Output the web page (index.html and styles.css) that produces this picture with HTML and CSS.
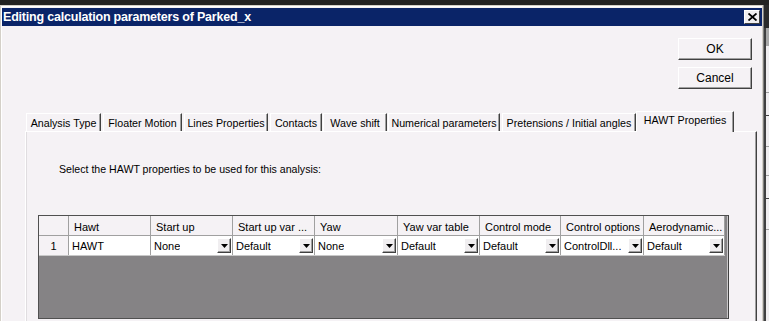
FILE: index.html
```html
<!DOCTYPE html>
<html>
<head>
<meta charset="utf-8">
<link rel="stylesheet" href="styles.css">
</head>
<body>
<div class="screen">
  <div class="topstrip"></div>
  <div class="main">
    <div class="window">
      <div class="titlebar">
        <span class="title">Editing calculation parameters of Parked_x</span>
        <div class="closebtn"><svg width="9" height="8" viewBox="0 0 9 8"><path d="M0.5 0.5 L8.5 7.5 M8.5 0.5 L0.5 7.5" stroke="#000" stroke-width="1.8"/></svg></div>
      </div>
      <div class="body">
        <div class="buttons">
          <div class="btn">OK</div>
          <div class="btn">Cancel</div>
        </div>
        <div class="tabs">
          <div class="tab w1">Analysis Type</div>
          <div class="tab w2">Floater Motion</div>
          <div class="tab w3">Lines Properties</div>
          <div class="tab w4">Contacts</div>
          <div class="tab w5">Wave shift</div>
          <div class="tab w6">Numerical parameters</div>
          <div class="tab w7">Pretensions / Initial angles</div>
          <div class="tab active w8">HAWT Properties</div>
        </div>
        <div class="panel">
          <div class="intro">Select the HAWT properties to be used for this analysis:</div>
          <div class="grid">
            <div class="row head">
              <div class="cell rh"></div>
              <div class="cell c1">Hawt</div>
              <div class="cell c2">Start up</div>
              <div class="cell c3">Start up var ...</div>
              <div class="cell c4">Yaw</div>
              <div class="cell c5">Yaw var table</div>
              <div class="cell c6">Control mode</div>
              <div class="cell c7">Control options</div>
              <div class="cell c8">Aerodynamic...</div>
            </div>
            <div class="row data">
              <div class="cell rh">1</div>
              <div class="cell c1">HAWT</div>
              <div class="cell c2 combo"><span>None</span><i class="dd"><svg width="7" height="4" viewBox="0 0 7 4"><path d="M0 0H7L3.5 4Z" fill="#000"/></svg></i></div>
              <div class="cell c3 combo"><span>Default</span><i class="dd"><svg width="7" height="4" viewBox="0 0 7 4"><path d="M0 0H7L3.5 4Z" fill="#000"/></svg></i></div>
              <div class="cell c4 combo"><span>None</span><i class="dd"><svg width="7" height="4" viewBox="0 0 7 4"><path d="M0 0H7L3.5 4Z" fill="#000"/></svg></i></div>
              <div class="cell c5 combo"><span>Default</span><i class="dd"><svg width="7" height="4" viewBox="0 0 7 4"><path d="M0 0H7L3.5 4Z" fill="#000"/></svg></i></div>
              <div class="cell c6 combo"><span>Default</span><i class="dd"><svg width="7" height="4" viewBox="0 0 7 4"><path d="M0 0H7L3.5 4Z" fill="#000"/></svg></i></div>
              <div class="cell c7 combo"><span>ControlDll...</span><i class="dd"><svg width="7" height="4" viewBox="0 0 7 4"><path d="M0 0H7L3.5 4Z" fill="#000"/></svg></i></div>
              <div class="cell c8 combo"><span>Default</span><i class="dd"><svg width="7" height="4" viewBox="0 0 7 4"><path d="M0 0H7L3.5 4Z" fill="#000"/></svg></i></div>
            </div>
          </div>
        </div>
      </div>
    </div>
    <div class="side">
      <div class="side-top"></div>
      <div class="side-mid"></div>
      <div class="side-list">
        <div class="sl a"></div>
        <div class="sl b"></div>
        <div class="sl c"></div>
        <div class="sl d"></div>
        <div class="sl e"></div>
        <div class="sl f"></div>
      </div>
    </div>
  </div>
</div>
</body>
</html>
```
FILE: styles.css
```css
html, body {
  margin: 0;
  padding: 0;
  background: #f5f2f5;
}
.screen {
  width: 769px;
  height: 321px;
  overflow: hidden;
  display: flex;
  flex-direction: column;
  font-family: "Liberation Sans", Arial, sans-serif;
  font-size: 11px;
  color: #000;
}
.topstrip {
  height: 5px;
  background: #222222;
  flex: none;
}
.main {
  flex: 1;
  display: flex;
  min-height: 0;
}
.window {
  width: 760px;
  flex: none;
  border-top: 1px solid #d4d0c8;
  border-left: 1px solid #d4d0c8;
  border-right: 1px solid #d4d0c8;
  padding: 2px 0 0 1px;
  box-shadow: inset 1px 1px 0 #ffffff;
  background: #f5f2f5;
  display: flex;
  flex-direction: column;
}
.titlebar {
  height: 18px;
  background: #0a2468;
  display: flex;
  align-items: center;
  justify-content: space-between;
  padding: 0 2px 0 1px;
  flex: none;
}
.title {
  color: #fff;
  font-family: "Liberation Sans", Arial, sans-serif;
  font-weight: bold;
  font-size: 12.5px;
  letter-spacing: -0.2px;
}
.closebtn {
  width: 14px;
  height: 12px;
  background: #f0eef0;
  border-top: 1px solid #fff;
  border-left: 1px solid #fff;
  border-right: 1px solid #404040;
  border-bottom: 1px solid #404040;
  display: flex;
  align-items: center;
  justify-content: center;
}
.body {
  flex: 1;
  display: flex;
  flex-direction: column;
  min-height: 0;
}
.buttons {
  display: flex;
  flex-direction: column;
  align-items: flex-end;
  gap: 7px;
  padding: 12px 10px 0 0;
}
.btn {
  width: 72px;
  height: 20px;
  border-top: 1px solid #fff;
  border-left: 1px solid #fff;
  border-right: 1px solid #404040;
  border-bottom: 1px solid #404040;
  box-shadow: inset -1px -1px 0 #a0a0a0;
  display: flex;
  align-items: center;
  justify-content: center;
  font-size: 12px;
}
.tabs {
  margin-top: 22px;
  margin-left: 23px;
  height: 20px;
  display: flex;
  align-items: flex-end;
  gap: 1px;
  padding-left: 1px;
  flex: none;
}
.tab {
  border-top: 1px solid #fff;
  border-left: 1px solid #fff;
  border-right: 1px solid #404040;
  box-shadow: inset -1px 0 0 #a0a0a0;
  display: flex;
  align-items: center;
  justify-content: center;
  white-space: nowrap;
  font-size: 10.7px;
  flex: none;
  box-sizing: border-box;
  height: 18px;
}
.tab.active {
  height: 21px;
  margin-bottom: -1px;
  background: #f5f2f5;
  position: relative;
  z-index: 2;
  align-items: flex-start;
  padding-top: 2px;
  margin-left: -1px;
}
.w1 { width: 75px; }
.w2 { width: 79px; margin-left: 1px; }
.w3 { width: 84px; margin-left: 1px; }
.w4 { width: 52px; margin-left: 1px; }
.w5 { width: 64px; }
.w6 { width: 112px; }
.w7 { width: 134px; margin-left: 1px; }
.w8 { width: 98px; }
.panel {
  flex: 1;
  width: 718px;
  margin-left: 23px;
  border-top: 1px solid #fff;
  border-left: 1px solid #fff;
  border-right: 1px solid #404040;
  box-shadow: inset 1px 0 0 #e0dde0, inset -1px 0 0 #a0a0a0;
  padding: 30px 0 0 12px;
  position: relative;
  z-index: 1;
}
.intro {
  padding-left: 21px;
  height: 14px;
  line-height: 14px;
  font-size: 10.6px;
}
.grid {
  margin-top: 39px;
  width: 691px;
  height: 104px;
  background: #858385;
  border: 1px solid #505050;
  border-right-color: #404040;
  box-shadow: inset -1px 0 0 #c8c6c8;
  box-sizing: border-box;
}
.row {
  display: flex;
  height: 19px;
}
.row.head {
  height: 20px;
  background: #f5f2f5;
  border-bottom: 1px solid #a0a0a0;
  box-sizing: border-box;
  width: 686px;
}
.row.data {
  background: #fff;
  border-bottom: 1px solid #c8c8c8;
  width: 686px;
}
.cell {
  border-right: 1px solid #a0a0a0;
  box-sizing: border-box;
  display: flex;
  align-items: center;
  white-space: nowrap;
  overflow: hidden;
  padding-left: 4px;
  flex: none;
}
.head .cell {
  padding-top: 3px;
  padding-left: 5px;
}
.rh {
  width: 30px;
  background: #f5f2f5;
  justify-content: center;
  padding-left: 0;
}
.data .cell { padding-left: 3px; }
.data .rh { padding-left: 0; }
.c1 { width: 82px; }
.c2 { width: 82px; }
.c3 { width: 82px; }
.c4 { width: 83px; }
.c5 { width: 82px; }
.c6 { width: 81px; }
.c7 { width: 83px; }
.c8 { width: 81px; }
.combo {
  justify-content: space-between;
  padding-right: 1px;
}
.combo span {
  overflow: hidden;
}
.dd {
  width: 12px;
  height: 13px;
  background: #f0eef0;
  border-top: 1px solid #fff;
  border-left: 1px solid #fff;
  border-right: 1px solid #404040;
  border-bottom: 1px solid #404040;
  box-shadow: inset -1px -1px 0 #a0a0a0;
  display: flex;
  align-items: center;
  justify-content: center;
  flex: none;
}
.side {
  flex: 1;
  display: flex;
  flex-direction: column;
  border-left: 1px solid #808080;
  background: #f0eef0;
}
.side-top {
  height: 23px;
  background: #2a2a2a;
}
.side-mid {
  height: 18px;
  background: #a8a8a8;
  border-left: 2px solid #404040;
}
.side-list {
  flex: 1;
  border-left: 2px solid #404040;
  display: flex;
  flex-direction: column;
}
.sl {
  border-bottom: 1px solid #a0a0a0;
}
.sl.a { height: 46px; }
.sl.b { height: 22px; border-bottom-color: #404040; }
.sl.c { height: 30px; }
.sl.d { height: 28px; }
.sl.e { height: 22px; border-bottom-color: #404040; }
.sl.f { height: 30px; }
```
